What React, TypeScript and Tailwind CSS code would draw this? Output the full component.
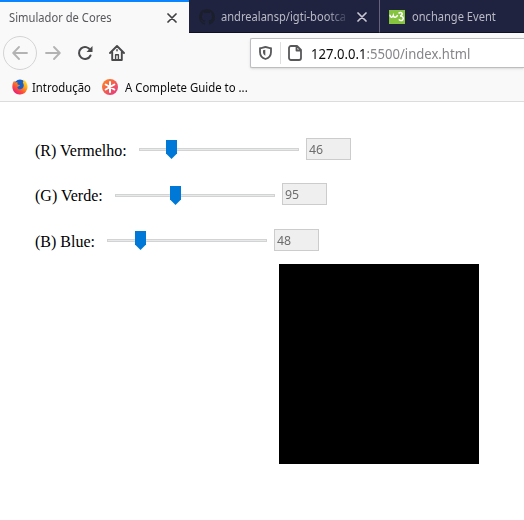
import React from "react";

const ui = "font-['Noto_Sans','Open_Sans',sans-serif]";

function Close({ color }: { color: string }) {
  return (
    <svg width="10" height="10" viewBox="0 0 10 10" className="shrink-0" stroke={color} strokeWidth="1.7" strokeLinecap="round">
      <path d="M1 1l8 8M9 1L1 9" />
    </svg>
  );
}

function Tabs() {
  return (
    <div className={`flex h-[33px] bg-[#202340] text-[12px] ${ui}`}>
      <div className="flex w-[189px] items-center justify-between border-t-2 border-[#0a84ff] bg-[#f9f9fa] pr-3 pl-[9px] text-[#58585c]">
        <span className="w-[104px] origin-left scale-x-[0.932] whitespace-nowrap">Simulador de Cores</span>
        <Close color="#3f3f42" />
      </div>
      <div className="flex w-[191px] items-center border-r border-b border-[#0e1024] border-r-[#62647a] pt-0.5 pl-[10px] text-[#b9bac6]">
        <svg width="16" height="16" viewBox="0 0 16 16" fill="#1b1f2b" className="shrink-0">
          <path d="M8 0C3.58 0 0 3.58 0 8c0 3.54 2.29 6.53 5.47 7.59.4.07.55-.17.55-.38 0-.19-.01-.82-.01-1.49-2.01.37-2.53-.49-2.69-.94-.09-.23-.48-.94-.82-1.13-.28-.15-.68-.52-.01-.53.63-.01 1.08.58 1.23.82.72 1.21 1.87.87 2.33.66.07-.52.28-.87.51-1.07-1.78-.2-3.64-.89-3.64-3.95 0-.87.31-1.59.82-2.15-.08-.2-.36-1.02.08-2.12 0 0 .67-.21 2.2.82a7.6 7.6 0 0 1 4 0c1.53-1.04 2.2-.82 2.2-.82.44 1.1.16 1.92.08 2.12.51.56.82 1.27.82 2.15 0 3.07-1.87 3.75-3.65 3.95.29.25.54.73.54 1.48 0 1.07-.01 1.93-.01 2.2 0 .21.15.46.55.38A8 8 0 0 0 16 8c0-4.42-3.58-8-8-8z" />
        </svg>
        <div className="ml-[6px] w-[129px] whitespace-nowrap [mask-image:linear-gradient(to_right,black_82%,transparent)]">
          <span className="inline-block origin-left scale-x-[0.925]">andrealansp/igti-bootca</span>
        </div>
        <div className="ml-[7px]"><Close color="#c8c8d2" /></div>
      </div>
      <div className="flex flex-1 items-center border-b border-[#0e1024] pt-0.5 pl-[9px] text-[#b9bac6]">
        <svg width="16" height="14" viewBox="0 0 16 14" className="shrink-0">
          <rect width="16" height="14" fill="#86c440" />
          <path d="M0.900 4.800c.3 3 2.600 3 3.400.8c.5 2.500 3.300 2.300 4.300-.6M9.500 3.400C11.500 1.700 14 2.800 13 4.700c-.4.800-1.200 1.200-2 1.300c2.800-.2 4 2.200 2.800 3.700c-1.100 1.400-3.100 1.100-3.900-.3" fill="none" stroke="#fff" strokeWidth="1.500" />
        </svg>
        <span className="ml-[7px] origin-left scale-x-[0.925] whitespace-nowrap">onchange Event</span>
      </div>
    </div>
  );
}

function NavBar() {
  return (
    <div className="flex h-[39px] items-center pl-[3px]">
      <div className="flex h-[34px] w-[34px] items-center justify-center rounded-full border border-[#d4d4d5]">
        <svg width="16" height="14" viewBox="0 0 16 14" fill="none" stroke="#b3b3b4" strokeWidth="1.8" strokeLinecap="round" strokeLinejoin="round">
          <path d="M15 7H1.3M7 1L1.2 7L7 13" />
        </svg>
      </div>
      <svg width="16" height="14" viewBox="0 0 16 14" className="ml-2" fill="none" stroke="#b3b3b4" strokeWidth="1.8" strokeLinecap="round" strokeLinejoin="round">
        <path d="M1 7h13.7M9 1l5.8 6L9 13" />
      </svg>
      <svg width="16" height="16" viewBox="0 0 16 16" className="ml-4" fill="none" stroke="#4a4a4d" strokeWidth="2">
        <path d="M13.4 5.3A6 6 0 1 0 13.5 10.5" strokeLinecap="round" />
        <path d="M15.5 1v6h-6z" fill="#4a4a4d" stroke="none" />
      </svg>
      <svg width="16" height="16" viewBox="0 0 16 16" className="ml-4" fill="none" stroke="#4a4a4d" strokeWidth="1.9" strokeLinecap="round" strokeLinejoin="round">
        <path d="M1 8L8 1L15 8M3.2 7v8h9.6V7" />
        <path d="M6.6 15V9.8h2.8V15" strokeWidth="1.4" />
        <path d="M8 4.8v1" strokeWidth="1.5" />
      </svg>
      <div className={`ml-[125px] flex h-[30px] flex-1 items-center rounded-l-[2px] border border-r-0 border-[#bdbdbf] bg-white pl-2 text-[14px] shadow-sm ${ui}`}>
        <svg width="13" height="14" viewBox="0 0 13 14" fill="none" stroke="#58585a" strokeWidth="1.8" strokeLinejoin="round">
          <path d="M1 2.1C3 2 4.8 1 6.5 1s3.5 1 5.5 1.1V6c0 3.5-2 6-5.5 7C3 12 1 9.500 1 6z" />
          <path d="M6.300 3.700v6c-1.400-.8-2.300-2-2.300-3.700V4.300z" fill="#58585a" stroke="none" />
        </svg>
        <div className="ml-2 h-[22px] w-px bg-[#dededf]" />
        <svg width="14" height="16" viewBox="0 0 14 16" className="ml-[7px]" fill="none" stroke="#58585a" strokeWidth="1.8" strokeLinejoin="round">
          <path d="M3 1h6l4 4v8a2 2 0 0 1-2 2H3a2 2 0 0 1-2-2V3a2 2 0 0 1 2-2zM8.500 1v4.500H13" />
        </svg>
        <span className="mt-[2px] ml-[9px] origin-left scale-x-[0.935] whitespace-nowrap text-[#85858a]"><span className="text-[#0c0c0d]">127.0.0.1</span>:5500/index.html</span>
      </div>
    </div>
  );
}

function Bookmarks() {
  return (
    <div className={`flex h-[29px] items-center pl-3 text-[12px] text-[#0c0c0d] ${ui}`}>
      <svg width="16" height="16" viewBox="0 0 16 16">
        <defs>
          <linearGradient id="fox" x1="1" y1="0" x2="0.2" y2="1">
            <stop stopColor="#fff044" /><stop offset=".35" stopColor="#ffb21a" /><stop offset=".65" stopColor="#ff5730" /><stop offset="1" stopColor="#e31587" />
          </linearGradient>
        </defs>
        <circle cx="8" cy="7" r="6.400" fill="#1b5fc4" />
        <path d="M11 .4c4 2 5.400 6.500 4 10.200A7.600 7.600 0 0 1 .5 9.500C0 6 .8 3.500 2.300 1.800l.9 1.800c.8-.5 1.600-.5 2.500-.2C5.300 4.200 5.200 5 6 5.800l2 .3c-.4 1.400-2.100 1.300-2.800 2.300c1 2.600 4.800 2.400 6 .2c1-2 .6-3.600-.4-5.200c.8-.9.700-2 .2-3z" fill="url(#fox)" />
      </svg>
      <span className="mt-[2px] ml-1 w-[58px] origin-left scale-x-[0.945] whitespace-nowrap">Introdução</span>
      <svg width="16" height="16" viewBox="0 0 16 16" className="ml-3">
        <defs>
          <linearGradient id="star" x1="0" y1="0" x2="1" y2="1">
            <stop stopColor="#ff8a18" /><stop offset="1" stopColor="#e4308c" />
          </linearGradient>
        </defs>
        <circle cx="8" cy="8" r="8" fill="url(#star)" />
        <path d="M8 3v10M3.700 5.500l8.600 5M12.300 5.500l-8.600 5" stroke="#fff" strokeWidth="2" strokeLinecap="round" />
      </svg>
      <span className="mt-[2px] ml-[7px] origin-left scale-x-[0.95] whitespace-nowrap">A Complete Guide to ...</span>
    </div>
  );
}

function Channel({ label, value, labelWidth, offset, shift }: { label: string; value: number; labelWidth: string; offset: number; shift: string }) {
  return (
    <div className="flex h-[22px]">
      <span className={`pt-[2px] font-['Liberation_Serif',serif] text-[16px] leading-[22px] whitespace-nowrap text-black ${labelWidth}`}>{label}</span>
      <div className={`relative h-[19px] w-[160px] ${shift}`}>
        <div className="mt-2 h-[3px] border border-[#d3d3d3] bg-[#e7eaea]" />
        <svg width="11" height="19" viewBox="0 0 11 19" className="absolute top-0" style={{ left: offset }}>
          <path d="M0 0h11v13.500L5.500 19L0 13.500z" fill="#0078d7" />
        </svg>
      </div>
      <div className={`ml-[7px] flex h-[22px] w-[45px] items-center border border-[#cccccc] bg-[#efefef] pt-[2px] pl-[2px] text-[13px] text-[#6d6d6d] ${ui}`}>
        <span className="origin-left scale-x-[0.95]">{value}</span>
      </div>
    </div>
  );
}

export default function App() {
  return (
    <div className="h-[520px] w-[524px] overflow-hidden bg-white">
      <header className="h-[102px] border-b border-[#dcdcdd] bg-[#f9f9fa]">
        <Tabs />
        <NavBar />
        <Bookmarks />
      </header>
      <main className="pt-9 pl-[35px]">
        <Channel label="(R) Vermelho:" value={46} labelWidth="w-[104px]" offset={27} shift="mt-[2px]" />
        <div className="h-[23px]" />
        <Channel label="(G) Verde:" value={95} labelWidth="w-[80px]" offset={55} shift="mt-[3px]" />
        <div className="h-6" />
        <Channel label="(B) Blue:" value={48} labelWidth="w-[72px]" offset={28} shift="mt-[2px]" />
        <div className="mt-[13px] ml-[244px] h-[200px] w-[200px] bg-black" />
      </main>
    </div>
  );
}
